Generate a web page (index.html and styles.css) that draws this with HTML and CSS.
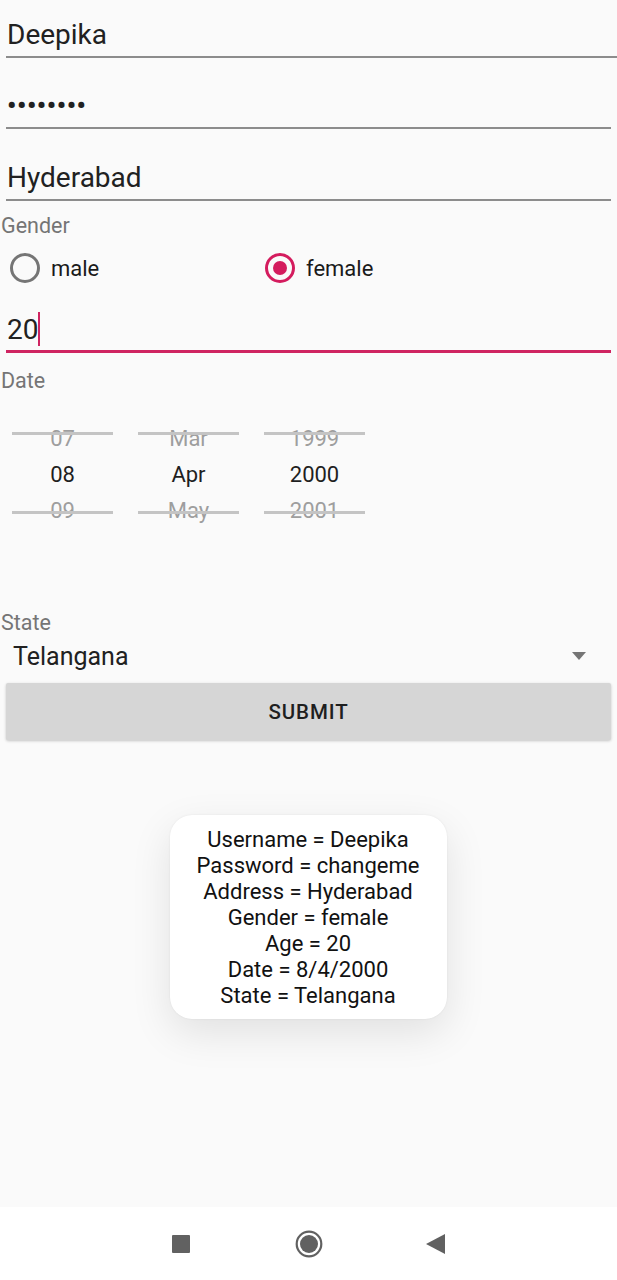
FILE: index.html
```html
<!DOCTYPE html>
<html>
<head>
<meta charset="utf-8">
<link rel="stylesheet" href="styles.css">
</head>
<body>
<div class="screen">
  <main class="form">
    <div class="field field-wide"><span class="value">Deepika</span></div>
    <div class="field"><span class="value dots">••••••••</span></div>
    <div class="field"><span class="value">Hyderabad</span></div>

    <div class="label label-gender">Gender</div>
    <div class="radios">
      <label class="radio"><span class="ring"></span><span class="rtext">male</span></label>
      <label class="radio checked"><span class="ring"><span class="dot"></span></span><span class="rtext">female</span></label>
    </div>

    <div class="field focused"><span class="value">20</span><span class="cursor"></span></div>

    <div class="label label-date">Date</div>
    <div class="picker">
      <div class="col">
        <div class="item faded">07</div>
        <div class="item">08</div>
        <div class="item faded">09</div>
      </div>
      <div class="col">
        <div class="item faded">Mar</div>
        <div class="item">Apr</div>
        <div class="item faded">May</div>
      </div>
      <div class="col">
        <div class="item faded">1999</div>
        <div class="item">2000</div>
        <div class="item faded">2001</div>
      </div>
    </div>

    <div class="label label-state">State</div>
    <div class="spinner">
      <span class="spin-text">Telangana</span>
      <svg class="arrow" width="14" height="8" viewBox="0 0 14 8"><path d="M0 0h14L7 8z" fill="#757575"/></svg>
    </div>

    <div class="button">SUBMIT</div>

    <div class="toast-wrap">
      <div class="toast">
        <div>Username = Deepika</div>
        <div>Password = changeme</div>
        <div>Address = Hyderabad</div>
        <div>Gender = female</div>
        <div>Age = 20</div>
        <div>Date = 8/4/2000</div>
        <div>State = Telangana</div>
      </div>
    </div>
  </main>

  <nav class="navbar">
    <svg width="18" height="18" viewBox="0 0 18 18"><rect x="0" y="0" width="18" height="18" rx="1" fill="#616161"/></svg>
    <svg width="28" height="28" viewBox="0 0 28 28"><circle cx="14" cy="14" r="12.3" fill="none" stroke="#616161" stroke-width="2.2"/><circle cx="14" cy="14" r="9" fill="#616161"/></svg>
    <svg width="19" height="20" viewBox="0 0 19 20"><path d="M0 10L19 0v20z" fill="#616161"/></svg>
  </nav>
</div>
</body>
</html>
```

FILE: styles.css
```css
html, body {
  margin: 0;
  padding: 0;
}
body {
  background: #fafafa;
  font-family: Roboto, "Noto Sans", sans-serif;
  color: #1f1f1f;
}
.screen {
  width: 617px;
  height: 1280px;
  display: flex;
  flex-direction: column;
  overflow: hidden;
}
.form {
  flex: 1;
  display: flex;
  flex-direction: column;
}
.field {
  margin: 0 6px;
  height: 34px;
  display: flex;
  align-items: flex-end;
  border-bottom: 2px solid #8c8c8c;
  padding-bottom: 5px;
  font-size: 28px;
  line-height: 32px;
  color: #212121;
}
.field:first-child {
  margin-top: 17px;
  margin-right: 0;
}
.field:nth-child(2) {
  margin-top: 30px;
}
.field:nth-child(3) {
  margin-top: 31px;
}
.value {
  padding-left: 1px;
}
.dots {
  font-size: 26px;
  letter-spacing: 0.6px;
  font-weight: 700;
  position: relative;
  top: -1px;
}
.label {
  font-size: 21.5px;
  color: #757575;
  line-height: 24px;
  padding-left: 1px;
}
.label-gender {
  margin-top: 13px;
}
.radios {
  display: flex;
  height: 44px;
  margin-top: 8px;
  align-items: center;
}
.radio {
  display: flex;
  align-items: center;
  font-size: 22px;
  color: #1a1a1a;
}
.radio:first-child {
  width: 255px;
  padding-left: 10px;
}
.ring {
  width: 30px;
  height: 30px;
  box-sizing: border-box;
  border: 3px solid #757575;
  border-radius: 50%;
  display: flex;
  align-items: center;
  justify-content: center;
}
.radio.checked .ring {
  border-color: #d41c5e;
}
.dot {
  width: 14px;
  height: 14px;
  border-radius: 50%;
  background: #d41c5e;
}
.rtext {
  margin-left: 11px;
}
.field.focused {
  margin-top: 22px;
  border-bottom: 3px solid #cf2461;
  padding-bottom: 4px;
  height: 34px;
}
.cursor {
  width: 2px;
  height: 34px;
  background: #cf2461;
  margin-bottom: 0;
  margin-left: 0;
}
.label-date {
  margin-top: 16px;
}
.picker {
  display: grid;
  grid-template-columns: repeat(3, 101px);
  column-gap: 25px;
  margin-left: 12px;
  margin-top: 28px;
}
.col {
  position: relative;
  display: flex;
  flex-direction: column;
}
.col::before,
.col::after {
  content: "";
  position: absolute;
  left: 0;
  right: 0;
  height: 3px;
  background: #c4c4c4;
}
.col::before {
  top: 11px;
}
.col::after {
  top: 90px;
}
.item {
  height: 36px;
  line-height: 36px;
  text-align: center;
  font-size: 22px;
  color: #1f1f1f;
}
.item.faded {
  color: #9e9e9e;
}
.label-state {
  margin-top: 82px;
}
.spinner {
  display: flex;
  align-items: center;
  justify-content: space-between;
  height: 42px;
  margin: 0 0 0 13px;
  padding-right: 31px;
}
.spin-text {
  font-size: 25px;
  color: #212121;
}
.button {
  margin: 6px 6px 0 6px;
  height: 57px;
  background: #d6d6d6;
  border-radius: 2px;
  box-shadow: 0 1px 3px rgba(0, 0, 0, 0.22);
  display: flex;
  align-items: center;
  justify-content: center;
  font-size: 20.5px;
  font-weight: 500;
  letter-spacing: 0.9px;
  color: #1f1f1f;
}
.toast-wrap {
  display: flex;
  justify-content: center;
  margin-top: 75px;
  padding-right: 1px;
}
.toast {
  width: 277px;
  box-sizing: border-box;
  background: #ffffff;
  border-radius: 22px;
  box-shadow: 0 14px 40px rgba(0, 0, 0, 0.10), 0 0 2px rgba(0, 0, 0, 0.08);
  padding: 12px 0 10px;
  text-align: center;
  font-size: 22px;
  line-height: 26px;
  color: #111;
}
.navbar {
  height: 73px;
  background: #ffffff;
  display: flex;
  align-items: center;
  justify-content: center;
  gap: 0;
  padding-bottom: 0;
}
.navbar svg:nth-child(1) {
  margin-right: 105px;
}
.navbar svg:nth-child(3) {
  margin-left: 103px;
}
```
